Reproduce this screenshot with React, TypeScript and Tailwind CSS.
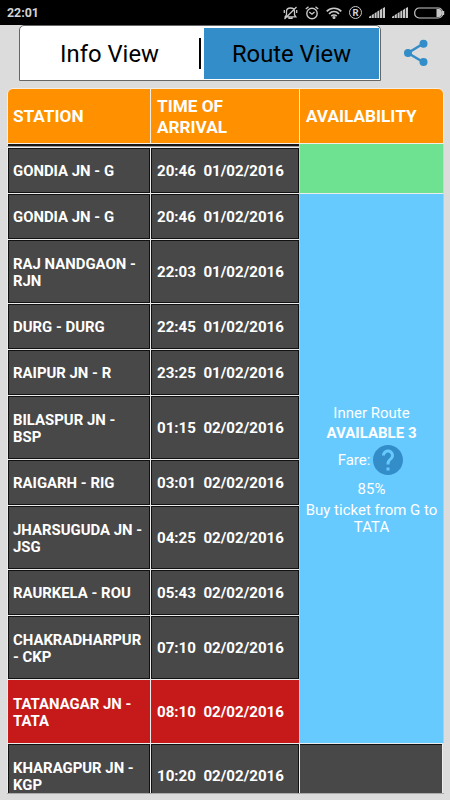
import { clsx } from "clsx";

type Stop = {
  lines: string[];
  time: string;
  date: string;
  current?: boolean;
};

const stops: Stop[] = [
  { lines: ["GONDIA JN - G"], time: "20:46", date: "01/02/2016" },
  { lines: ["GONDIA JN - G"], time: "20:46", date: "01/02/2016" },
  { lines: ["RAJ NANDGAON -", "RJN"], time: "22:03", date: "01/02/2016" },
  { lines: ["DURG - DURG"], time: "22:45", date: "01/02/2016" },
  { lines: ["RAIPUR JN - R"], time: "23:25", date: "01/02/2016" },
  { lines: ["BILASPUR JN -", "BSP"], time: "01:15", date: "02/02/2016" },
  { lines: ["RAIGARH - RIG"], time: "03:01", date: "02/02/2016" },
  { lines: ["JHARSUGUDA JN -", "JSG"], time: "04:25", date: "02/02/2016" },
  { lines: ["RAURKELA - ROU"], time: "05:43", date: "02/02/2016" },
  { lines: ["CHAKRADHARPUR", "- CKP"], time: "07:10", date: "02/02/2016" },
  { lines: ["TATANAGAR JN -", "TATA"], time: "08:10", date: "02/02/2016", current: true },
  { lines: ["KHARAGPUR JN -", "KGP"], time: "10:20", date: "02/02/2016" },
];

const SignalIcon = () => (
  <svg width="16" height="11" viewBox="0 0 16 11" fill="#c8c8c8">
    <path d="M0 11V9.7L2.2 8.4V11zM2.8 11V8l2-1.3V11zM5.6 11V6.2l2-1.3V11zM8.3 11V4.6l2-1.3V11zM11 11V2.9l2-1.3V11zM13.7 11V1.2L16 0v11z" />
  </svg>
);

const StatusBar = () => (
  <div className="flex h-[25px] items-center bg-black pl-[7px] text-[#d4d4d4]">
    <div className="w-[276px] pt-px text-[12.4px] font-bold leading-none">22:01</div>
    <svg width="15" height="14" viewBox="0 0 15 14" fill="none" stroke="#c8c8c8" strokeWidth="1.3">
      <path d="M3.5 9V5.5C3.5 3.3 5.2 2 7.5 2s4 1.3 4 3.5V9l1.3 1.8H2.2L3.5 9M6 11v1.4h3V11M1.3 4v3M13.7 4v3M1.5 13L13.5 1" />
    </svg>
    <svg className="ml-[7px]" width="14" height="14" viewBox="0 0 14 14" fill="none" stroke="#c8c8c8" strokeWidth="1.4">
      <circle cx="7" cy="7.5" r="5.2" />
      <path d="M.8 3L3.5.8M13.2 3L10.5.8M4.3 6L7 8.2 9.5 6" />
    </svg>
    <svg className="ml-[7px]" width="16" height="12" viewBox="0 0 16 12" fill="none" stroke="#c8c8c8" strokeWidth="1.7">
      <path d="M.7 4.3C5 .2 11 .2 15.3 4.3M3 6.8c3-2.8 7-2.8 10 0M5.3 9.1c1.5-1.4 3.9-1.4 5.4 0" />
      <circle cx="8" cy="10.5" r=".7" />
    </svg>
    <div className="ml-[7px] flex size-[13px] items-center justify-center rounded-full border border-[#c8c8c8] text-[9.5px] font-bold leading-none">
      R
    </div>
    <div className="ml-[7px] flex gap-[7px]">
      <SignalIcon />
      <SignalIcon />
    </div>
    <svg className="ml-[6px]" width="31" height="12" viewBox="0 0 31 12">
      <rect x=".7" y="1" width="28" height="10" rx="4.5" fill="none" stroke="#c8c8c8" strokeWidth="1.2" />
      <path d="M22.5 2H25c4 0 4 8 0 8h-2.5z" fill="#c8c8c8" />
      <rect x="29" y="4" width="1.2" height="4" fill="#c8c8c8" />
    </svg>
  </div>
);

const ViewTabs = () => (
  <div className="flex h-[63px] items-start pl-[19px]">
    <div className="flex h-[56px] w-[362px] rounded-t-[5px] border border-[#666] bg-white text-[23.8px] leading-none text-black">
      <div className="flex w-[179px] items-center justify-center pt-[4px]">Info View</div>
      <div className="mt-[12px] h-[31px] w-[2px] bg-black" />
      <div className="mb-[1px] ml-[3px] mt-[2px] flex w-[175px] items-center justify-center bg-[#338dc8] pt-[3px]">
        Route View
      </div>
    </div>
    <svg className="ml-[22px] mt-[14px]" width="26" height="28" viewBox="0 0 26 28" fill="#338dc8">
      <path d="M20 4.8L5 14l15 9" fill="none" stroke="#338dc8" strokeWidth="2.5" />
      <circle cx="20.5" cy="4.8" r="4" />
      <circle cx="5" cy="14" r="4" />
      <circle cx="20.5" cy="23" r="4" />
    </svg>
  </div>
);

const TableHeader = () => (
  <div className="flex h-[56px] overflow-hidden rounded-t-[6px] border border-[#f5eee5] bg-[#ff9000] text-[17.2px] font-bold leading-[21px]">
    <div className="flex w-[142px] items-center pl-[5px] pt-px">STATION</div>
    <div className="flex w-[150px] items-center border-x border-[#f5eee5] pl-[6px] pt-[2px]">
      <div>TIME OF<br />ARRIVAL</div>
    </div>
    <div className="flex items-center pl-[6px] pt-px">AVAILABILITY</div>
  </div>
);

const StopRow = ({ stop }: { stop: Stop }) => {
  const cell = clsx(
    "flex items-center border-l border-t border-[#ececec]",
    stop.current ? "bg-[#c61a1a]" : "bg-[#484848] shadow-[inset_0_0_0_1px_#111]"
  );
  return (
    <div className={clsx("flex shrink-0", stop.lines.length > 1 ? "h-[64px]" : "h-[46px]")}>
      <div className={clsx(cell, "w-[143px] pl-[5px] pt-[3px] text-[14.9px]")}>
        <div>
          {stop.lines.map((line) => (
            <div key={line} className="whitespace-nowrap">{line}</div>
          ))}
        </div>
      </div>
      <div className={clsx(cell, "w-[149px] whitespace-pre pl-[6px] pt-[3px] text-[15.1px]")}>
        {stop.time}{"  "}{stop.date}
      </div>
    </div>
  );
};

const Availability = () => (
  <div className="flex w-[145px] flex-col">
    <div className="h-[49px] border-x border-[#a9e8bd] bg-[#6fe292]" />
    <div className="flex h-[550px] flex-col items-center border-x border-t border-x-[#94d6fa] border-t-[#ececec] bg-[#66caff] pt-[211px] text-center text-[15px] leading-[17.5px]">
      <div>Inner Route</div>
      <div className="mt-[2px] font-bold">AVAILABLE 3</div>
      <div className="mr-[2px] mt-[2px] flex h-[32px] items-center gap-[3px]">
        <span className="pt-[2px]">Fare:</span>
        <svg width="30" height="30" viewBox="2 2 20 20" fill="#338dc8">
          <path d="M12 2C6.48 2 2 6.48 2 12s4.48 10 10 10 10-4.48 10-10S17.52 2 12 2zm1 17h-2v-2h2v2zm2.07-7.75l-.9.92C13.45 12.9 13 13.5 13 15h-2v-.5c0-1.1.45-2.1 1.17-2.83l1.24-1.26c.37-.36.59-.86.59-1.41 0-1.1-.9-2-2-2s-2 .9-2 2H8c0-2.21 1.79-4 4-4s4 1.79 4 4c0 .88-.36 1.68-.93 2.25z" />
        </svg>
      </div>
      <div className="mt-[5px]">85%</div>
      <div className="mt-[3px] whitespace-nowrap">Buy ticket from G to<br />TATA</div>
    </div>
    <div className="mr-px flex-1 border-x border-t border-[#ececec] bg-[#484848] shadow-[inset_0_1px_0_#111]" />
  </div>
);

export default function App() {
  return (
    <div className="h-[800px] w-[450px] overflow-hidden bg-[#dcdcdc] font-['Roboto',sans-serif] text-white">
      <StatusBar />
      <ViewTabs />
      <main className="ml-[7px] w-[437px]">
        <TableHeader />
        <div className="flex h-[650px] overflow-hidden border-b border-[#aaa] text-[15px] font-bold leading-[17.5px]">
          <div className="w-[292px]">
            {/* edge of the row scrolled under the header */}
            <div className="h-[3px] border-b border-l border-b-[#999] border-l-[#ececec] bg-[#161616]" />
            {stops.map((stop, i) => (
              <StopRow key={i} stop={stop} />
            ))}
          </div>
          <div className="flex font-normal">
            <Availability />
          </div>
        </div>
      </main>
    </div>
  );
}
